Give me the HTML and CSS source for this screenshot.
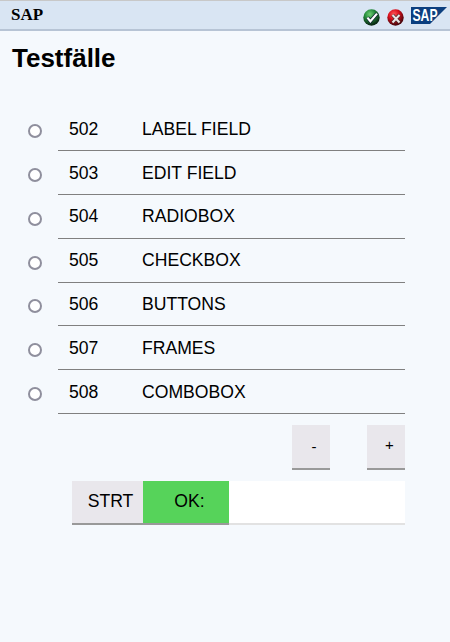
FILE: index.html
```html
<!DOCTYPE html>
<html lang="en">
<head>
    <meta charset="UTF-8">
    <meta name="viewport" content="width=device-width, initial-scale=1.0">
    <title>Testfälle</title>
    <link rel="stylesheet" href="styles.css">
</head>
<body>
    <header class="title-bar">
        <span class="title-text">SAP</span>
        <div class="title-icons">
            <svg class="status-icon" viewBox="0 0 17 17">
                <defs>
                    <radialGradient id="ok-fill" cx="0.4" cy="0.3" r="0.65">
                        <stop offset="0" stop-color="#6fce72"/>
                        <stop offset="0.5" stop-color="#23893a"/>
                        <stop offset="1" stop-color="#0a2a14"/>
                    </radialGradient>
                    <radialGradient id="cancel-fill" cx="0.4" cy="0.3" r="0.65">
                        <stop offset="0" stop-color="#ff5a5a"/>
                        <stop offset="0.5" stop-color="#d80f1c"/>
                        <stop offset="1" stop-color="#4e060c"/>
                    </radialGradient>
                </defs>
                <circle cx="8.5" cy="8.5" r="8.2" fill="url(#ok-fill)"/>
                <path d="M4.4 8.6l3 3.6L14 4.6" fill="none" stroke="#123" stroke-width="3.6"/>
                <path d="M4.4 8.6l3 3.6L14 4.6" fill="none" stroke="#fff" stroke-width="2.2"/>
            </svg>
            <svg class="status-icon" viewBox="0 0 17 17">
                <circle cx="8.5" cy="8.5" r="8.2" fill="url(#cancel-fill)"/>
                <path d="M5.5 6l7 7.5M12.5 6l-7 7.5" fill="none" stroke="#4a2a2a" stroke-width="3.4"/>
                <path d="M5.5 6l7 7.5M12.5 6l-7 7.5" fill="none" stroke="#ece6e6" stroke-width="2"/>
            </svg>
            <svg class="sap-logo" viewBox="0 0 36 17">
                <polygon points="0,0 36,0 19,17 0,17" fill="#0c3f7f"/>
                <text x="1.5" y="14" class="sap-logo-text" textLength="25" lengthAdjust="spacingAndGlyphs">SAP</text>
            </svg>
        </div>
    </header>

    <main class="content">
        <h1 class="page-title">Testfälle</h1>

        <ul class="case-list">
            <li class="case-row">
                <input type="radio" class="case-radio" name="case">
                <div class="case-line"><span class="case-id">502</span><span>LABEL FIELD</span></div>
            </li>
            <li class="case-row">
                <input type="radio" class="case-radio" name="case">
                <div class="case-line"><span class="case-id">503</span><span>EDIT FIELD</span></div>
            </li>
            <li class="case-row">
                <input type="radio" class="case-radio" name="case">
                <div class="case-line"><span class="case-id">504</span><span>RADIOBOX</span></div>
            </li>
            <li class="case-row">
                <input type="radio" class="case-radio" name="case">
                <div class="case-line"><span class="case-id">505</span><span>CHECKBOX</span></div>
            </li>
            <li class="case-row">
                <input type="radio" class="case-radio" name="case">
                <div class="case-line"><span class="case-id">506</span><span>BUTTONS</span></div>
            </li>
            <li class="case-row">
                <input type="radio" class="case-radio" name="case">
                <div class="case-line"><span class="case-id">507</span><span>FRAMES</span></div>
            </li>
            <li class="case-row">
                <input type="radio" class="case-radio" name="case">
                <div class="case-line"><span class="case-id">508</span><span>COMBOBOX</span></div>
            </li>
        </ul>

        <div class="pager">
            <button class="pager-button">-</button>
            <button class="pager-button pager-plus">+</button>
        </div>

        <div class="run-bar">
            <button class="run-button">STRT</button>
            <div class="run-status">OK:</div>
            <div class="run-output"></div>
        </div>
    </main>
</body>
</html>
```

FILE: styles.css
```css
* {
    box-sizing: border-box;
    margin: 0;
    padding: 0;
}

body {
    font-family: 'Liberation Sans', Arial, sans-serif;
    background-color: #f5f9fd;
    color: #000;
    height: 642px;
    overflow: hidden;
}

.title-bar {
    display: flex;
    justify-content: space-between;
    align-items: center;
    height: 31px;
    padding: 0 3px 0 11px;
    background-color: #d9e5f3;
    border-top: 1px solid #c8c8c8;
    border-bottom: 2px solid #b7c4d5;
}

.title-text {
    font-family: 'Liberation Serif', serif;
    font-size: 17px;
    font-weight: bold;
}

.title-icons {
    display: flex;
    align-items: center;
    gap: 7px;
    padding-top: 5px;
}

.status-icon {
    width: 17px;
    height: 17px;
}

.sap-logo {
    width: 36px;
    height: 17px;
    margin-top: -4px;
}

.sap-logo-text {
    font-family: 'Liberation Sans', sans-serif;
    font-size: 17px;
    font-weight: bold;
    fill: #fff;
}

.content {
    padding: 0 45px 0 12px;
}

.page-title {
    font-size: 26px;
    line-height: 29px;
    margin-top: 13px;
}

.case-list {
    list-style: none;
    margin-top: 34.4px;
}

.case-row {
    display: flex;
    align-items: center;
    height: 43.8px;
}

.case-radio {
    appearance: none;
    width: 14px;
    height: 14px;
    margin: 4px 16px 0 16px;
    background-color: #fff;
    border: 2px solid #8f8f9d;
    border-radius: 50%;
}

.case-line {
    display: flex;
    align-items: center;
    flex: 1;
    height: 100%;
    padding: 1px 0 0 11px;
    border-bottom: 1px solid #808080;
    font-size: 17.6px;
}

.case-id {
    width: 73px;
}

.pager {
    display: flex;
    justify-content: flex-end;
    gap: 37px;
    margin-top: 11px;
}

.pager-button {
    width: 38px;
    height: 45px;
    padding-left: 6px;
    background-color: #e9e7ec;
    border: none;
    border-bottom: 2px solid #999;
    font-family: inherit;
    font-size: 15px;
}

.pager-plus {
    padding-left: 7px;
    padding-bottom: 4px;
}

.run-bar {
    display: flex;
    height: 44px;
    margin: 11px 0 0 60px;
    font-size: 17.6px;
}

.run-button {
    width: 71px;
    padding-left: 6px;
    background-color: #e9e7ec;
    border: none;
    border-bottom: 2px solid #999;
    font-family: inherit;
    font-size: 17.6px;
}

.run-status {
    display: flex;
    align-items: center;
    justify-content: center;
    width: 86px;
    padding-left: 7px;
    background-color: #56d35a;
    border-bottom: 2px solid #999;
}

.run-output {
    flex: 1;
    background-color: #fff;
    border-bottom: 2px solid #e2e2e2;
}
```
